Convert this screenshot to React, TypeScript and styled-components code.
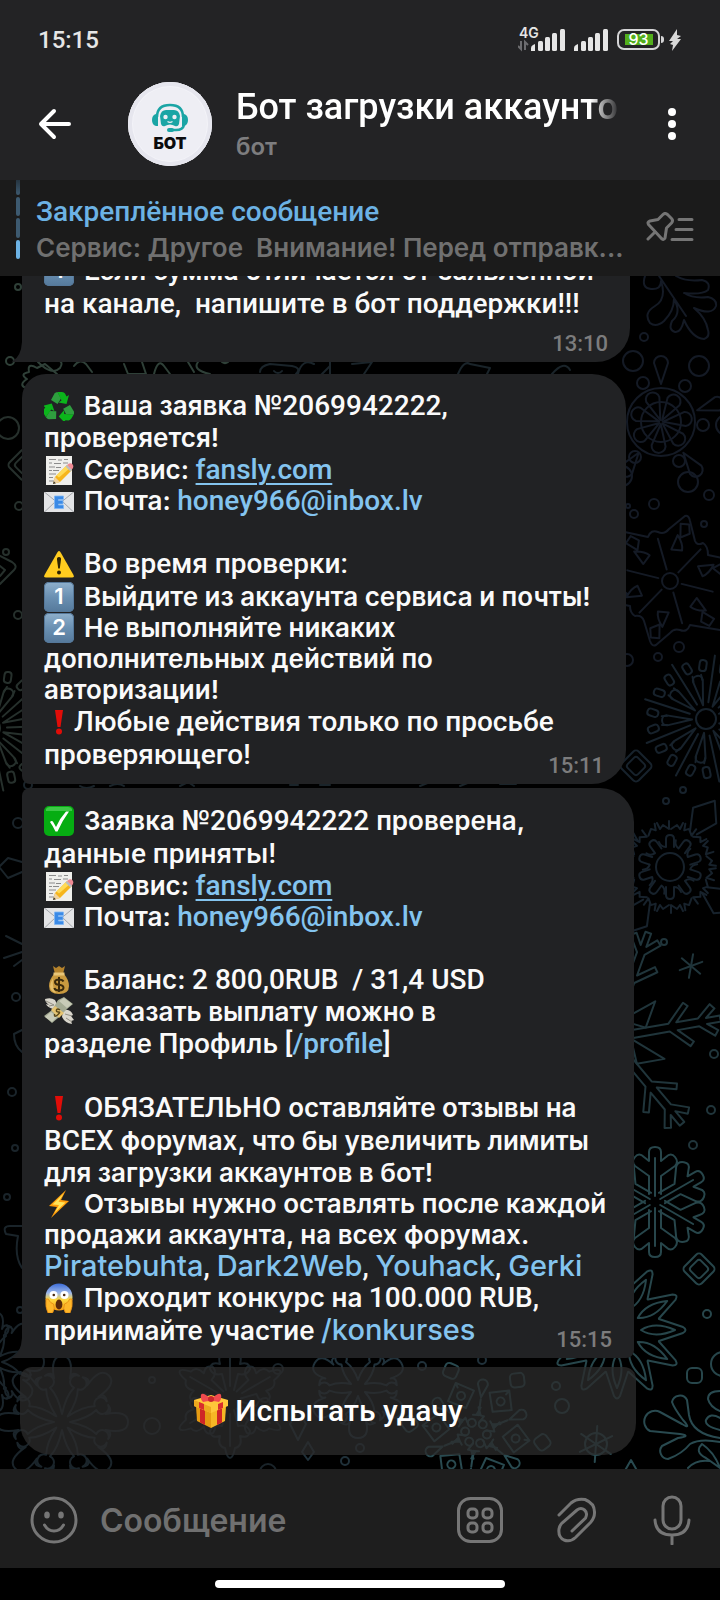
import React from 'react';
import styled, { createGlobalStyle } from 'styled-components';

const roboto = 'Roboto, "Noto Sans", sans-serif';
const inter = 'Inter, "Noto Sans", sans-serif';

const GlobalStyle = createGlobalStyle`
  * { box-sizing: border-box; }
  body { margin: 0; background: #000; color: #fafafa; font-family: ${roboto}; font-weight: 500; }
  button, input { font: inherit; color: inherit; border: 0; padding: 0; background: none; }
  svg { display: block; flex: none; }
`;

const Screen = styled.div`
  display: flex;
  flex-direction: column;
  height: 100vh;
  overflow: hidden;
`;

/* ---------- status bar ---------- */

const StatusBar = styled.div`
  flex: none;
  display: flex;
  align-items: center;
  justify-content: space-between;
  height: 72px;
  padding: 7px 38px 0 38px;
  background: #232325;
  color: #e6e6e6;
`;

const Clock = styled.time`
  font-size: 24px;
  line-height: 28px;
`;

const StatusIcons = styled.div`
  display: flex;
  align-items: center;
`;

const Battery = styled.div`
  display: flex;
  align-items: center;
  margin: 0 4px 0 9px;
`;

const BatteryBody = styled.span`
  display: grid;
  place-items: center;
  width: 43px;
  height: 21px;
  border: 2px solid #d4d4d6;
  border-radius: 7px;
  background: linear-gradient(#52ae1c, #52ae1c) center / 28px 11px no-repeat;
  font: 500 16px/17px ${inter};
  color: #fff;
`;

const BatteryTip = styled.span`
  width: 3px;
  height: 7px;
  margin-left: 1px;
  border-radius: 0 3px 3px 0;
  background: #d4d4d6;
`;

const Bars = () => (
  <g fill="#e6e6e6">
    <path d="M13 30v-3q0-2 2-3l2-1v7z" />
    <rect x="20" y="20" width="5" height="10" rx="1.500" />
    <rect x="27" y="16" width="5" height="14" rx="1.500" />
    <rect x="34" y="12" width="5" height="18" rx="1.500" />
    <rect x="42" y="8" width="5" height="22" rx="1.500" />
  </g>
);

/* ---------- header ---------- */

const Header = styled.header`
  flex: none;
  display: flex;
  align-items: center;
  height: 108px;
  padding: 0 44px 4px 38px;
  background: #232325;
`;

const IconButton = styled.button`
  flex: none;
  display: grid;
  place-items: center;
  cursor: pointer;
`;

const Avatar = styled.div`
  flex: none;
  display: flex;
  flex-direction: column;
  align-items: center;
  width: 84px;
  height: 84px;
  margin: 0 24px 0 56px;
  padding-top: 21px;
  border-radius: 50%;
  background: #eeeef4;
  box-shadow: inset 0 0 0 4px #e6e6ee, inset 0 0 0 5px #f3f3f8;
  color: #0b0b0d;
  font: 900 16px/20px ${inter};
`;

const Peer = styled.div`
  flex: 1;
  min-width: 0;
  margin-right: 48px;
`;

const PeerName = styled.h1`
  margin: 0 0 4px;
  overflow: hidden;
  white-space: nowrap;
  font-size: 36px;
  font-weight: 500;
  line-height: 42px;
  color: #fff;
  mask-image: linear-gradient(to right, #000 calc(100% - 30px), transparent);
`;

const PeerKind = styled.p`
  margin: 0;
  font: 600 24px/30px ${inter};
  color: #7d7d7f;
`;

/* ---------- pinned message ---------- */

const Pinned = styled.section`
  flex: none;
  display: flex;
  align-items: flex-start;
  height: 96px;
  padding: 0 26px 0 16px;
  background: #1b1b1b;
`;

const PinnedText = styled.div`
  flex: 1;
  min-width: 0;
  padding: 15px 24px 0 16px;
`;

const PinnedTitle = styled.h2`
  margin: 0 0 3px;
  font-size: 28px;
  font-weight: 500;
  line-height: 34px;
  color: #6cb2e4;
`;

const PinnedPreview = styled.p`
  margin: 0;
  white-space: pre;
  font: 600 26px/32px ${inter};
  color: #707070;
`;

const PinButton = styled(IconButton)`
  margin-top: 32px;
`;

/* ---------- chat ---------- */

const Chat = styled.main`
  position: relative;
  flex: 1;
  min-height: 0;
  display: flex;
  flex-direction: column;
  justify-content: flex-end;
  padding: 0 22px 14px;
  overflow: hidden;
`;

const Wallpaper = styled.svg`
  position: absolute;
  inset: 0;
  width: 100%;
  height: 100%;
`;

const Bubble = styled.article<{ $width: number; $gap: number; $bottom: number; $radius: string }>`
  position: relative;
  flex: none;
  width: min(${p => p.$width}px, 100%);
  margin-bottom: ${p => p.$gap}px;
  padding: 15px 16px ${p => p.$bottom}px 22px;
  border-radius: ${p => p.$radius};
  background: #212224;
`;

const Line = styled.div<{ $lead?: number }>`
  height: ${p => p.$lead ?? 31}px;
  padding-top: ${p => (p.$lead ?? 31) - 31}px;
  white-space: pre;
  font-size: 28px;
  line-height: 31px;
`;

const Soft = styled.span`
  font: 600 26px/26px ${inter};
`;

const Link = styled.a<{ $underlined?: boolean }>`
  color: #84c4ef;
  text-decoration: ${p => (p.$underlined ? 'underline' : 'none')};
  text-decoration-thickness: 2px;
  text-underline-offset: 4px;
`;

const RoundLink = styled(Link)`
  font: 500 29px/26px ${inter};
`;

const Sent = styled.time`
  position: absolute;
  right: 22px;
  bottom: 5px;
  font-size: 22px;
  font-weight: 500;
  line-height: 26px;
  color: #7c7c7d;
`;

const Tail = styled.svg`
  position: absolute;
  left: -10px;
  bottom: 0;
`;

const BubbleTail = () => (
  <Tail width="11" height="20" viewBox="0 0 11 20">
    <path d="M10 0h1v20H1q-1 0-.5-1Q9 15 10 0z" fill="#212224" />
  </Tail>
);

const InlineButton = styled.button`
  position: relative;
  flex: none;
  display: flex;
  align-items: center;
  justify-content: center;
  gap: 6px;
  width: min(616px, 100%);
  height: 88px;
  margin-left: -2px;
  border-radius: 12px 12px 32px 32px;
  background: rgba(43, 43, 43, 0.76);
  font-size: 30px;
  line-height: 36px;
  color: #fff;
  cursor: pointer;
`;

/* ---------- composer ---------- */

const Composer = styled.form`
  flex: none;
  display: flex;
  align-items: center;
  height: 99px;
  padding: 3px 29px 0 30px;
  background: #1e1e1e;
  color: #767676;
`;

const MessageInput = styled.input`
  flex: 1;
  min-width: 0;
  height: 60px;
  margin: 0 20px 0 22px;
  font: 600 32px/40px ${inter};
  outline: none;
  &::placeholder { color: #707070; opacity: 1; }
`;

const Tools = styled.div`
  display: flex;
  align-items: center;
  gap: 54px;
`;

const GestureBar = styled.div`
  flex: none;
  height: 32px;
  padding-top: 12px;
  background: #000;
  &::after {
    content: '';
    display: block;
    width: 290px;
    height: 8px;
    margin: 0 auto;
    border-radius: 4px;
    background: #fff;
  }
`;

/* ---------- emoji ---------- */

const EmojiBox = styled.svg<{ $tight?: boolean }>`
  display: inline-block;
  vertical-align: -6px;
  width: 30px;
  height: 30px;
  margin-right: ${p => (p.$tight ? 0 : 10)}px;
`;

const Keycap = styled.span`
  display: inline-block;
  overflow: hidden;
  width: 30px;
  height: 30px;
  margin-right: 10px;
  vertical-align: -6px;
  border-radius: 5px;
  background: linear-gradient(#8fb0cc, #6a90b2 50%, #55799b);
  box-shadow: inset 0 0 0 1px #55789a;
  text-align: center;
  font: 600 22px/29px ${inter};
  color: #fff;
`;

const emojiArt = {
  recycle: (
    <>
      {[0, 120, 240].map(a => (
        <g key={a} transform={`rotate(${a} 15 17)`}>
          <path d="M7 9 10.500 2.500q1-1.500 3-1.500L17 7.500 13.500 13z" fill="#2f9e3f" />
          <path d="M13.500 1H18q2 0 3 1.500l1.500 3L25 4l-2.500 9-8-1.500 3-2z" fill="#0bb51b" />
        </g>
      ))}
    </>
  ),
  memo: (
    <>
      <path d="M2 1h26v29H2z" fill="#efefec" />
      <path d="M5 4.500h7m2 .5h4m2-.5h4M5 8h3m2 .5h7m2-.5h5M5 12h6m1 .5h5M5 15.500h3m1 0h6M5 19h7M5 22.500h4M5 26h5" stroke="#8b8b8b" strokeWidth="1.200" />
      <path d="m9 29 2-7L23 10l5 5-12 12z" fill="#f6b51c" />
      <path d="m12.500 20.500 2.500 2L26 13l-3-3z" fill="#ffdb57" />
      <path d="m9 29 2-7 5 5z" fill="#f0d3a0" />
      <path d="m9 29 .8-2.800 2 2z" fill="#333" />
      <path d="m23 10 2-1.500q2-1 3.500.8t.5 3.700l-1.500 2z" fill="#f08a94" />
      <path d="m21.500 11.500 1.500-1.500 5 5-1.500 1.500z" fill="#b9bcc2" />
    </>
  ),
  email: (
    <>
      <rect y="6" width="30" height="20" rx="1" fill="#e3e4e6" />
      <path d="M1 25.500 12 15M29 25.500 18 15M1 6.500 15 18 29 6.500" fill="none" stroke="#a3a6ab" />
      <path d="M10.500 10h9v3.500h-5v1h4.500V18h-4.500v1h5v3.500h-9z" fill="#3b8ae6" stroke="#7fb6f5" strokeWidth=".8" />
    </>
  ),
  warning: (
    <>
      <path d="M13.600 3q1.400-2 2.800 0L29.500 26q1 2.500-1.500 2.500H2Q-.5 28.500.5 26z" fill="#ffcc1f" />
      <path d="M15 8q2.300 0 2 2.500l-1.200 9h-1.600l-1.200-9Q12.700 8 15 8z" fill="#2e2403" />
      <circle cx="15" cy="23.500" r="2" fill="#2e2403" />
    </>
  ),
  exclamation: (
    <>
      <path d="M11 3h8l-2.500 17h-3z" fill="#e10d08" />
      <circle cx="15" cy="24.500" r="3" fill="#e10d08" />
    </>
  ),
  check: (
    <>
      <rect width="30" height="30" rx="5" fill="#06ad12" />
      <path d="M2 3q1-2 4-2h18q3 0 4 2v2H2z" fill="#56d35c" opacity=".7" />
      <path d="M6 16q2-2 3.500.5L12 21Q16 12 22 5.500h3Q18 15 13.500 25.500h-2Q9 20 6 16z" fill="#fff" />
    </>
  ),
  moneybag: (
    <>
      <path d="M10 9Q5 15 5 21q0 8 10 8t10-8q0-6-5-12z" fill="#c99a3f" />
      <path d="M9 13q-3 5-3 9 1 5 6 6-4-5-3-15z" fill="#e6bf68" />
      <path d="m9 1 3 2 3-2 3 2 3-2-2 8h-8z" fill="#b5832c" />
      <path d="M9.500 7.500h11v3h-11z" fill="#e9c678" />
      <path d="M15 12v15M19.500 16.500q-1-2-4.500-2-4 0-4 2.500t4 2.800q4.500.4 4.500 3T15 25.500q-4 0-4.700-2.500" fill="none" stroke="#3a2a0c" strokeWidth="2" />
    </>
  ),
  moneywings: (
    <>
      <path d="M1 2q6-2 10 1l3 6-5 3Q3 10 2 7l3 1Q1 5 1 2z" fill="#d9d6cc" />
      <path d="M19 13q8-1 10 5l-2 1 3 4-3 1 1 3q-7-1-10-7z" fill="#d9d6cc" />
      <path d="M2 4l8 4M5 9l5-1M28 19l-7-2M28 25l-6-4" stroke="#918e83" />
      <path d="m14 3 6-3 9 7-6 5-9 9-6 5-8-7 8-6z" fill="#a4ab94" />
      <path d="m15 4 5-3 8 6-5 4zM1 20l6-5 6 5-5 5z" fill="#c8cbb8" />
      <path d="m11 9 9 7-5 5-8-8z" fill="#e6c471" />
      <path d="M16 13q-3-2-3.500 0t2 2-1 3-3-1" fill="none" stroke="#5a4716" strokeWidth="1.500" />
    </>
  ),
  bolt: (
    <>
      <path d="M22 1 5 17l8 1-6 11L25 12l-8-1z" fill="#ff9d0a" />
      <path d="M20 4 8.500 15.500 15 16l-4.500 8L21.500 13.500l-7-.8z" fill="#ffe45a" />
    </>
  ),
  scream: (
    <>
      <defs>
        <linearGradient id="scream" x1="0" y1="0" x2="0" y2="1">
          <stop offset="0" stopColor="#3c6cd9" />
          <stop offset=".35" stopColor="#9db8ea" />
          <stop offset=".6" stopColor="#ffd83e" />
          <stop offset="1" stopColor="#f49b12" />
        </linearGradient>
      </defs>
      <circle cx="15" cy="14" r="13.500" fill="url(#scream)" />
      <circle cx="9.500" cy="12" r="4" fill="#fff" />
      <circle cx="20.500" cy="12" r="4" fill="#fff" />
      <circle cx="9.800" cy="12" r="1.300" fill="#4a2a10" />
      <circle cx="20.200" cy="12" r="1.300" fill="#4a2a10" />
      <ellipse cx="15" cy="21.500" rx="3.400" ry="5" fill="#5b2a0b" />
      <path d="M2 16q3-1 3.500 2 1 2 4 3 2 4-1 9H4Q1 24 2 16zM28 16q-3-1-3.500 2-1 2-4 3-2 4 1 9H26q3-6 2-14z" fill="#ffb82a" stroke="#e48a12" strokeWidth=".8" />
    </>
  ),
};

const Emoji = ({ name, label, tight }: { name: keyof typeof emojiArt; label: string; tight?: boolean }) => (
  <EmojiBox viewBox="0 0 30 30" role="img" aria-label={label} $tight={tight}>
    {emojiArt[name]}
  </EmojiBox>
);

const Gift = () => (
  <svg width="36" height="36" viewBox="0 0 36 36" aria-hidden="true">
    <path d="m3 13 15 6v16L4 28z" fill="#e59a12" />
    <path d="m33 13-15 6v16l14-7z" fill="#f6b725" />
    <path d="m7 15 5 2v15l-5-2.500zM29 15l-5 2v15l5-2.500z" fill="#cf2626" />
    <path d="M1 7 18 2l17 5v6l-17 7L1 13z" fill="#ffc73a" />
    <path d="M1 7v6l17 7v-6z" fill="#eda91f" />
    <path d="m6 9 5 2v6l-5-2zM30 9l-5 2v6l5-2z" fill="#d92d2d" />
    <path d="M18 6Q9-2 8 2t2 7q4-1 8-1 4 0 8 1 3-3 2-7t-10 4z" fill="#f04a4e" />
    <circle cx="18" cy="6" r="3" fill="#c9262c" />
  </svg>
);

/* ---------- wallpaper ---------- */

const Spin = ({ x, y, n, from = 0, children }: { x: number; y: number; n: number; from?: number; children: React.ReactNode }) => (
  <>
    {Array.from({ length: n }, (_, i) => (
      <g key={i} transform={`translate(${x} ${y}) rotate(${from + (360 / n) * i})`}>{children}</g>
    ))}
  </>
);

const Dots = ({ at }: { at: [number, number, number][] }) => (
  <>{at.map(([x, y, r]) => <circle key={`${x}-${y}`} cx={x} cy={y} r={r} />)}</>
);

const Drop = ({ near, far, w }: { near: number; far: number; w: number }) => (
  <path d={`M0 ${-near}L${-w} ${-far + w}A${w} ${w} 0 1 1 ${w} ${-far + w}z`} />
);

const Diamond = ({ x, y, r }: { x: number; y: number; r: number }) => (
  <g transform={`translate(${x} ${y}) rotate(45)`}>
    <rect x={-r * 0.55} y={-r * 0.55} width={r * 1.1} height={r * 1.1} rx="4" />
    <rect x={-r * 0.33} y={-r * 0.33} width={r * 0.66} height={r * 0.66} rx="3" />
  </g>
);

const Firework = ({ x, y }: { x: number; y: number }) => (
  <>
    <circle cx={x} cy={y} r="10" />
    <Spin x={x} y={y} n={9} from={-12}><Drop near={14} far={44} w={5} /></Spin>
    <Spin x={x} y={y} n={9} from={8}>
      <path d="M0-17V-64M-9-38l-2-5M9-38l2-5" />
      <rect x="-14" y="-58" width="7" height="11" rx="3" />
      <rect x="7" y="-58" width="7" height="11" rx="3" />
    </Spin>
  </>
);

const Blossom = ({ x, y, r, n = 8 }: { x: number; y: number; r: number; n?: number }) => (
  <Spin x={x} y={y} n={n}>
    <path d={`M0-8Q-4-${r * 0.4}-12-${r * 0.52}A6 6 0 0 0-17-${r * 0.7}Q-10-${r * 0.78}-8-${r * 0.66}Q-12-${r} 0-${r}Q12-${r} 8-${r * 0.66}Q10-${r * 0.78} 17-${r * 0.7}A6 6 0 0 0 12-${r * 0.52}Q4-${r * 0.4} 0-8z`} />
  </Spin>
);

const ChatWallpaper = () => (
  <Wallpaper viewBox="0 276 720 1193" preserveAspectRatio="xMaxYMin slice" fill="none" strokeWidth="2" strokeLinejoin="round" strokeLinecap="round" aria-hidden="true">
    <g stroke="#141a25">
      <path d="M659 276 686 316M645 276q-4 12 6 13t10-8q6 18-6 25t-5 17q6 5 14-2 10-10 10-22 8 14-2 22-4 9 3 11 6 1 9-12 8 18 20 19 6-2 4-9-2-12-14-22 18 8 22-2 1-7-8-9-14 2-24-4 18 2 24-3 3-8-6-10-16 2-26-4" />
      <Dots at={[[644, 337, 4], [643, 383, 6], [633, 361, 10], [685, 386, 6], [699, 366, 10], [703, 425, 6], [726, 425, 10], [679, 461, 6], [688, 482, 10], [635, 457, 6], [622, 476, 10]]} />
      <circle cx="661" cy="422" r="34" />
      <circle cx="661" cy="422" r="20" />
      <Spin x={661} y={422} n={7} from={-20}><Drop near={2} far={31} w={7} /></Spin>
      <Spin x={661} y={422} n={5}><Drop near={38} far={66} w={7} /></Spin>
      <Dots at={[[709, 495, 5], [654, 504, 5], [634, 514, 4], [704, 524, 3], [628, 506, 2]]} />
      <circle cx="670" cy="581" r="8" />
      <path d="M620 531 648 537q3-8 10-5 6 3 11-3l16-13q4-1 5 5l5 20q2 5 8 2 5 3 5 12l14 3M720 630l-30-5q-3 8-10 5-6-2-10 3l-14 12q-4 2-6-4l-6-20q-2-6-9-5-5-3-5-10l-10-2" />
      <Spin x={670} y={581} n={6} from={-16}><path d="M0-12V-44" /><path d="M10-30 20-42q3 10 0 16zM26-52l8 3-2 9-10 1z" /></Spin>
      <Dots at={[[679, 647, 5], [658, 657, 4], [627, 660, 6]]} />
    </g>

    <g stroke="#17222c">
      <Firework x={706} y={719} />
      <Diamond x={636} y={766} r={22} />
      <Dots at={[[683, 790, 3], [666, 801, 3]]} />
      <circle cx="670" cy="867" r="14" />
      <Spin x={670} y={867} n={10}>
        <path d="M-4-20V-28q0-4 4-4t4 4v8M-4-20q-5 0-7-5" />
        <path d="M-13-44l3 6 3-4 6 4v-8M13-44l-3 6-3-4-6 4" />
      </Spin>
      <Spin x={670} y={867} n={4} from={34}><path d="M-4-42-14-62 0-80 14-62 4-42" /></Spin>
    </g>

    <g stroke="#20353b">
      <Dots at={[[664, 942, 3], [714, 1054, 4], [711, 1110, 4], [693, 1145, 4]]} />
      <Spin x={691} y={966} n={6} from={10}><path d="M0 0V-12" /></Spin>
      <Spin x={610} y={1038} n={6} from={20}>
        <path d="M-4-20V-60L-22-78l4-4L-4-68V-90l-12-14 5-4 8 10v-14h6v14l8-10 5 4L4-90v22l14-14 4 4L4-60v40l26-30v28z" />
      </Spin>
    </g>

    <g stroke="#27464b">
      <Spin x={655} y={1202} n={6}>
        <path d="M-6-8V-26L-20-36q-4-4 0-9 4-5 9 0l5 4v-9q0-5 6-5t6 5v9l5-4q5-5 9 0 4 5 0 9L6-26v18" />
        <path d="M0-6V-44" />
      </Spin>
      <Diamond x={699} y={1269} r={22} />
      <Spin x={617} y={1330} n={12}>
        <path d="M-11-42-3-66q3-5 6 0l8 24" />
        <path d="M0-24Q-9-38 0-58 9-38 0-24z" />
      </Spin>
      <circle cx="707" cy="1314" r="4" />
      <rect x="687" y="1368" width="15" height="15" rx="5" />
      <circle cx="723" cy="1364" r="12" />
    </g>

    <g stroke="#2f4038">
      <Dots at={[[18, 287, 3], [10, 361, 4]]} />
      <path d="M26 388q-8-3 1-9-8-5 2-7-2-10 8-4l8-4 12 10M38 362q14 14 22 6 4-6-2-8M74 366q6-8 12-2l6 8M124 364l4 10h18l-4-12M154 374q4-16 10-8l6 8M188 362l6 10M198 362q-6 8 12 12M222 362a5 5 0 0 0 6 0" />
    </g>

    <g stroke="#26302c">
      <Dots at={[[8, 428, 11], [19, 506, 4], [18, 615, 4], [6, 552, 3]]} />
      <Diamond x={24} y={465} r={22} />
      <path d="M0 556 12 562q6 4 2 8L0 584M0 566l5 4-5 6" />
      <Firework x={-10} y={728} />
    </g>

    <g stroke="#1a242a">
      <Dots at={[[28, 785, 4], [18, 823, 5], [16, 997, 4], [12, 1092, 4], [15, 1148, 3], [7, 1197, 3], [20, 1310, 3]]} />
      <path d="M0 866 8 858 22 862M0 868 8 878 22 872M6 936 22 944M4 958 22 952M14 966 22 960M22 1030l-8 4q0 12 8 18M22 1226h-12q-8 0-4 8l12 2q-4 20 4 32" />
      <path d="M260 372q0-6 10-8l22 2q10 2 4 8M298 374q4-16 16-10M330 362v12M352 364l20-2-8 12M458 374q6-14 12-10M470 364l20 4-4 8M552 374q12-14 18-4M320 376l10-10M274 371a5 5 0 0 0 8 0" />
      <path d="M80 786q6 4 14 0M110 786q8-4 14 0M180 786l8-4 6 4M290 785h8M320 785h10M420 786l10-4M460 786l10-4M500 784h16" />
      <Blossom x={62} y={1422} r={66} />
      <Blossom x={-6} y={1362} r={50} />
      <Spin x={230} y={1400} n={6}>
        <path d="M-4-10l-4-16q-9 2-12-5 1-8 10-5-3-10 5-12 2-10 5-10t5 10q8 2 5 12 9-3 10 5-3 7-12 5l-4 16M0-14V-46" />
      </Spin>
      <Dots at={[[152, 1380, 3], [278, 1369, 5], [152, 1426, 8], [268, 1472, 8]]} />
    </g>

    <g stroke="#20313a">
      <Blossom x={358} y={1388} r={50} n={6} />
      <Dots at={[[422, 1366, 4], [482, 1360, 4], [360, 1448, 4], [345, 1461, 4]]} />
      <path d="m298 1410 8 14-8 16-8-16zM308 1442l6 10-6 8-6-8z" />
    </g>

    <g stroke="#294a50">
      <Spin x={476} y={1433} n={6} from={38}>
        <path d="M-4-18v8M-4-18l-7 3-1-8M4-18l7 3 1-8M0-27 14-40 0-54-14-40zM0-54v5" />
        <circle cy="-11" r="4" />
        <circle cy="-40" r="4" />
        <rect x="-7" y="-74" width="14" height="14" rx="4" transform="rotate(45 0 -67)" />
      </Spin>
      <Spin x={476} y={1433} n={6} from={8}>
        <path d="M0-18V-34" />
        <Drop near={36} far={54} w={5} />
      </Spin>
      <Dots at={[[562, 1406, 7], [556, 1386, 4]]} />
      <path d="M631 1460l8 14h-16z" />
      <circle cx="596" cy="1444" r="11" />
      <Spin x={596} y={1444} n={6} from={4}><path d="M0 0V-18" /></Spin>
      <path d="M720 1438Q692 1434 689 1415L687 1400A8 8 0 0 0 672 1402Q674 1408 683 1420 692 1430 682 1424L660 1412A10 10 0 1 0 650 1431L680 1434Q692 1436 678 1438L662 1446A8 8 0 0 0 668 1459Q682 1454 690 1444 700 1438 720 1442" />
      <path d="M720 1391q-12 0-12 8 2 8 12 12M720 1430q-16-4-14-10 4-8 14-2M720 1468q-6-16-18-24-8 8 4 14l14 10M688 1468q8-9 22-7" />
    </g>
  </Wallpaper>
);

/* ---------- screen ---------- */

const Contacts = () => (
  <>
    <Line $lead={32}>
      <Emoji name="memo" label="📝" />
      <Soft>Сервис: </Soft>
      <Link $underlined href="#fansly">fansly.com</Link>
    </Line>
    <Line>
      <Emoji name="email" label="📧" />
      <Soft>Почта: </Soft>
      <Link href="#mail">honey966@inbox.lv</Link>
    </Line>
  </>
);

export default function App() {
  return (
    <Screen>
      <GlobalStyle />
      <StatusBar>
        <Clock>15:15</Clock>
        <StatusIcons>
          <svg width="47" height="30" viewBox="0 4 47 30" aria-label="4G">
            <text x="1" y="17" fontFamily="Inter" fontSize="14" fontWeight="600" fill="#e6e6e6">4G</text>
            <path d="M3 20v8L0 25M7 29v-8l3 3" fill="none" stroke="#6d6d70" strokeWidth="2" />
            <Bars />
          </svg>
          <svg width="43" height="30" viewBox="4 4 43 30" aria-hidden="true"><Bars /></svg>
          <Battery>
            <BatteryBody>93</BatteryBody>
            <BatteryTip />
          </Battery>
          <svg width="14" height="22" viewBox="0 0 14 22" aria-hidden="true">
            <path d="M9 0 1 12h4L2 15l3 1-1 6 9-12H9l4-3-4-1z" fill="#d8d8d8" />
          </svg>
        </StatusIcons>
      </StatusBar>

      <Header>
        <IconButton aria-label="Назад">
          <svg width="34" height="32" viewBox="0 0 34 32" fill="none" stroke="#fff" strokeWidth="4" strokeLinecap="round" strokeLinejoin="round">
            <path d="M31 16H3M16 3 3 16l13 13" />
          </svg>
        </IconButton>
        <Avatar>
          <svg width="36" height="30" viewBox="0 0 36 30" aria-hidden="true">
            <path d="M5 14Q5 2 18 2t13 12" fill="none" stroke="#1aa5a5" strokeWidth="2.500" />
            <path d="M4 11q-4 1-4 6t4 6h2V11zM32 11q4 1 4 6t-4 6h-2V11z" fill="#1aa5a5" />
            <path d="M32 22q-1 5-8 5h-5" fill="none" stroke="#1aa5a5" strokeWidth="2.500" />
            <rect x="15" y="25" width="7" height="4" rx="2" fill="#1aa5a5" />
            <path d="M8 13q1-6 6-6h8q5 0 6 6l-1 8q-1 3-4 2-5-3-10 0-3 1-4-2z" fill="#1aa5a5" />
            <circle cx="13.500" cy="14" r="2.200" fill="#eeeef4" />
            <circle cx="22.500" cy="14" r="2.200" fill="#eeeef4" />
            <path d="M15.500 18.500q2.500 1.800 5 0" fill="none" stroke="#eeeef4" strokeWidth="1.200" />
          </svg>
          БОТ
        </Avatar>
        <Peer>
          <PeerName>Бот загрузки аккаунто</PeerName>
          <PeerKind>бот</PeerKind>
        </Peer>
        <IconButton aria-label="Меню">
          <svg width="8" height="32" viewBox="0 0 8 32" fill="#fff">
            <circle cx="4" cy="4" r="4" />
            <circle cx="4" cy="16" r="4" />
            <circle cx="4" cy="28" r="4" />
          </svg>
        </IconButton>
      </Header>

      <Pinned>
        <svg width="4" height="80" viewBox="0 0 4 80" aria-hidden="true">
          <defs>
            <linearGradient id="fade" x1="0" y1="0" x2="0" y2="1">
              <stop offset="0" stopColor="#1f2a33" />
              <stop offset="1" stopColor="#3d5a70" />
            </linearGradient>
          </defs>
          <rect y="-4" width="4" height="19" rx="2" fill="url(#fade)" />
          <rect y="17" width="4" height="19" rx="2" fill="#3d5a70" />
          <rect y="38" width="4" height="20" rx="2" fill="#3d5a70" />
          <rect y="60" width="4" height="19" rx="2" fill="#6cb2e4" />
        </svg>
        <PinnedText>
          <PinnedTitle>Закреплённое сообщение</PinnedTitle>
          <PinnedPreview>Сервис: Другое  Внимание! Перед отправк...</PinnedPreview>
        </PinnedText>
        <PinButton aria-label="Закреплённые сообщения">
          <svg width="48" height="30" viewBox="0 0 48 30" fill="none" stroke="#757575" strokeWidth="3" strokeLinecap="round" strokeLinejoin="round">
            <path d="M2 27 9 20M33 7.500h13M30 17.500h16M26 27.500h20" />
            <path d="M2.500 12.500q-1.500-2.500 1.500-3.500l8-1.500 5-5q2-2 4.500 0l4 4q2 2 0 4.500l-5 5-1.500 10q-1 2.500-3.500.5z" />
          </svg>
        </PinButton>
      </Pinned>

      <Chat>
        <ChatWallpaper />

        <Bubble $width={608} $gap={12} $bottom={43} $radius="22px 22px 34px 0">
          <Line><Keycap>1</Keycap>Если сумма отличается от заявленной</Line>
          <Line $lead={33}>на канале,  напишите в бот поддержки!!!</Line>
          <Sent>13:10</Sent>
          <BubbleTail />
        </Bubble>

        <Bubble $width={604} $gap={4} $bottom={14} $radius="24px 34px 34px 8px">
          <Line $lead={32}><Emoji name="recycle" label="♻️" /><Soft>Ваша заявка </Soft>№2069942222,</Line>
          <Line $lead={32}><Soft>проверяется!</Soft></Line>
          <Contacts />
          <Line />
          <Line $lead={32}><Emoji name="warning" label="⚠️" />Во время проверки:</Line>
          <Line $lead={33}><Keycap>1</Keycap><Soft>Выйдите из аккаунта сервиса и почты!</Soft></Line>
          <Line><Keycap>2</Keycap><Soft>Не выполняйте никаких</Soft></Line>
          <Line><Soft>дополнительных действий по</Soft></Line>
          <Line><Soft>авторизации!</Soft></Line>
          <Line $lead={32}><Emoji name="exclamation" label="❗" tight />Любые действия только по просьбе</Line>
          <Line $lead={33}>проверяющего!</Line>
          <Sent>15:11</Sent>
        </Bubble>

        <Bubble $width={612} $gap={9} $bottom={12} $radius="8px 34px 8px 0">
          <Line $lead={33}><Emoji name="check" label="✅" /><Soft>Заявка </Soft>№2069942222 <Soft>проверена,</Soft></Line>
          <Line $lead={33}>данные приняты!</Line>
          <Contacts />
          <Line />
          <Line $lead={32}><Emoji name="moneybag" label="💰" /><Soft>Баланс: </Soft>2 800,0RUB  / 31,4 USD</Line>
          <Line $lead={32}><Emoji name="moneywings" label="💸" /><Soft>Заказать выплату можно в</Soft></Line>
          <Line $lead={32}><Soft>разделе </Soft>Профиль [<Link href="#profile">/profile</Link>]</Line>
          <Line $lead={32} />
          <Line $lead={32}><Emoji name="exclamation" label="❗" />ОБЯЗАТЕЛЬНО <Soft>оставляйте отзывы на</Soft></Line>
          <Line $lead={33}>ВСЕХ <Soft>форумах, что бы увеличить лимиты</Soft></Line>
          <Line $lead={32}><Soft>для загрузки аккаунтов в бот!</Soft></Line>
          <Line><Emoji name="bolt" label="⚡" /><Soft>Отзывы нужно оставлять после каждой</Soft></Line>
          <Line><Soft>продажи аккаунта, на всех форумах.</Soft></Line>
          <Line $lead={32}>
            <RoundLink href="#piratebuhta">Piratebuhta</RoundLink>, <RoundLink href="#dark2web">Dark2Web</RoundLink>, <RoundLink href="#youhack">Youhack</RoundLink>, <RoundLink href="#gerki">Gerki</RoundLink>
          </Line>
          <Line><Emoji name="scream" label="😱" /><Soft>Проходит конкурс на </Soft>100.000 RUB,</Line>
          <Line $lead={33}><Soft>принимайте участие </Soft><RoundLink href="#konkurses">/konkurses</RoundLink></Line>
          <Sent>15:15</Sent>
          <BubbleTail />
        </Bubble>

        <InlineButton>
          <Gift />
          Испытать удачу
        </InlineButton>
      </Chat>

      <Composer onSubmit={e => e.preventDefault()}>
        <IconButton type="button" aria-label="Эмодзи">
          <svg width="48" height="48" viewBox="0 0 48 48" fill="none" stroke="currentColor" strokeWidth="3" strokeLinecap="round">
            <circle cx="24" cy="24" r="22" />
            <path d="M14.500 29q3.500 6 9.500 6t9.500-6" />
            <ellipse cx="17" cy="19" rx="2.800" ry="3.500" fill="currentColor" stroke="none" />
            <ellipse cx="31" cy="19" rx="2.800" ry="3.500" fill="currentColor" stroke="none" />
          </svg>
        </IconButton>
        <MessageInput aria-label="Сообщение" placeholder="Сообщение" />
        <Tools>
          <IconButton type="button" aria-label="Команды бота">
            <svg width="46" height="46" viewBox="0 0 46 46" fill="none" stroke="currentColor" strokeWidth="3">
              <rect x="1.500" y="1.500" width="43" height="43" rx="12" />
              <rect x="11" y="12" width="9" height="9" rx="3.500" />
              <rect x="26" y="12" width="9" height="9" rx="3.500" />
              <rect x="11" y="26" width="9" height="9" rx="3.500" />
              <rect x="26" y="26" width="9" height="9" rx="3.500" />
            </svg>
          </IconButton>
          <IconButton type="button" aria-label="Прикрепить файл">
            <svg width="40" height="46" viewBox="0 0 40 46" fill="none" stroke="currentColor" strokeWidth="3" strokeLinecap="round">
              <path d="M2 18 14 6Q20 1 28 2.500q10 4 9.500 13.500 0 5-4 9.500L18.500 40.500q-5.500 5-11.500 2.500-6-3-5-11 .5-3.500 3-6L20 13q4-3 7.500 0t1 8L15 34" />
            </svg>
          </IconButton>
          <IconButton type="button" aria-label="Голосовое сообщение">
            <svg width="40" height="50" viewBox="0 0 40 50" fill="none" stroke="currentColor" strokeWidth="3" strokeLinecap="round">
              <rect x="12" y="2" width="18" height="32" rx="9" />
              <path d="M4 25q1 15 17 15t17-15M21 41v8" />
            </svg>
          </IconButton>
        </Tools>
      </Composer>
      <GestureBar />
    </Screen>
  );
}
